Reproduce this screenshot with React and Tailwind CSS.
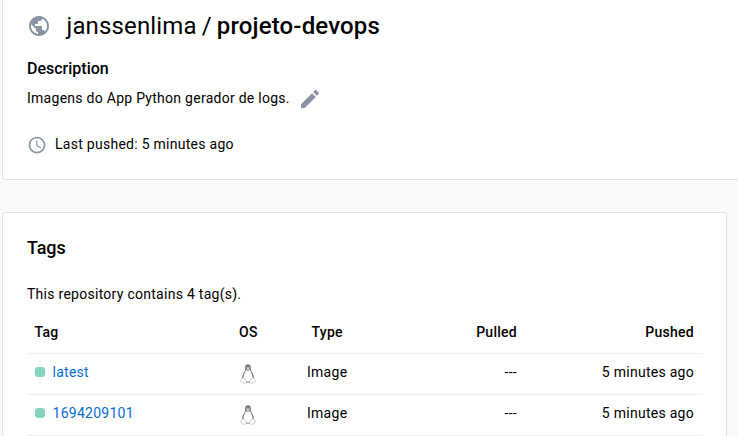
import { MdPublic, MdEdit, MdAccessTime } from "react-icons/md";

const tags = ["latest", "1694209101"];

function Tux() {
  return (
    <svg width="16" height="20" viewBox="0 0 16 20" fill="none">
      <path d="M8 .3C5.900.3 5 1.700 5.100 3.700c.1 2.200-.1 3.200-1.300 5.100C2.600 10.700 1.900 12.400 2.200 14.500h11.600c.3-2.100-.4-3.900-1.500-5.700-1.100-1.900-1.400-2.900-1.400-5.200C10.900 1.600 10.100.3 8 .3Z" fill="#7c7c7c" />
      <path d="M8 6.800c-.9 0-1.700-.4-2.100-1-.2 2.400-2.400 4.300-2.300 7.500.1 2.700 1.700 5.200 4.400 5.200s4.300-2.500 4.400-5.200c.1-3.200-2.100-5.100-2.300-7.500-.4.600-1.200 1-2.100 1Z" fill="#fff" />
      <path d="M6.200 4.700 8 4l1.800.7L8 6.300Z" fill="#e4e4e4" />
      <circle cx="7" cy="3.400" r=".6" fill="#ccc" />
      <circle cx="9" cy="3.400" r=".6" fill="#ccc" />
      <path d="M2.700 14c-.5.9-1.900.8-1.900 1.800 0 .8.300 1.300.1 2 0 1 3.500 1.700 4.700 1.400 1.400-.4 1-1.900.2-3-.9-1.300-2-3.300-3.100-2.200ZM13.300 14c.5.9 1.900.9 1.900 1.800 0 .8-.3 1.300-.1 2 0 1-3.500 1.700-4.600 1.400-1.500-.4-.9-1.900-.5-3 .5-1.400 2.200-3.300 3.300-2.200Z" fill="#fff" stroke="#b8b8b8" strokeWidth=".7" />
      <path d="M6.200 18.200h3.600" stroke="#888" strokeWidth=".9" />
    </svg>
  );
}

export default function App() {
  return (
    <div className="h-[436px] w-[738px] overflow-hidden bg-[#f9f9f9] pl-0.5 font-['Roboto',sans-serif] text-sm leading-5 tracking-[0.27px] text-black">
      <section className="h-[180px] rounded-bl-sm border-b border-l border-[#e1e2e6] bg-white pl-6 pt-[11px]">
        <h1 className="flex h-[30px] items-center text-2xl font-normal tracking-[0.15px]">
          <MdPublic className="mr-[15.5px] size-6 text-[#8993a5]" />
          <span>janssenlima</span>
          <span className="mx-[5px]">/</span>
          <span className="font-medium">projeto-devops</span>
        </h1>
        <h2 className="mt-[18px] text-base leading-5 font-medium tracking-normal">Description</h2>
        <div className="mt-2 flex h-6 items-center">
          <span className="-mt-0.5">Imagens do App Python gerador de logs.</span>
          <MdEdit className="ml-2 size-6 text-[#8993a5]" />
        </div>
        <div className="mt-6 flex h-5 items-center">
          <MdAccessTime className="mr-2 size-5 text-[#8993a5]" />
          <span className="-mt-0.5">Last pushed: 5 minutes ago</span>
        </div>
      </section>
      <section className="mt-8 h-[240px] w-[725px] rounded-t-sm border border-b-0 border-[#e1e2e6] bg-white px-6 pt-[23px]">
        <h2 className="text-lg leading-6 font-medium tracking-[-0.1px]">Tags</h2>
        <p className="mt-6">This repository contains 4 tag(s).</p>
        <table className="mt-2 w-[675px] table-fixed border-collapse">
          <colgroup>
            <col className="w-[204px]" />
            <col className="w-[68px]" />
            <col className="w-[120px]" />
            <col className="w-[106px]" />
            <col className="w-[177px]" />
          </colgroup>
          <thead>
            <tr className="h-[41px] border-b border-[#eeeeee] [&>th]:p-0 [&>th]:pb-px [&>th]:font-medium">
              <th><div className="pl-[7.5px] text-left">Tag</div></th>
              <th><div className="pl-2 text-left">OS</div></th>
              <th><div className="pl-[12.5px] text-left">Type</div></th>
              <th><div className="pr-2 text-right">Pulled</div></th>
              <th><div className="pr-2 text-right">Pushed</div></th>
            </tr>
          </thead>
          <tbody>
            {tags.map((tag) => (
              <tr key={tag} className="h-[41px] border-b border-[#eeeeee] [&>td]:p-0">
                <td>
                  <div className="-mt-1 flex items-center pl-2">
                    <span className="mr-[7.5px] size-2.5 rounded-[3px] bg-[#88d5c0]" />
                    <a className="text-[#086dd7]">{tag}</a>
                  </div>
                </td>
                <td><div className="pl-[9px]"><Tux /></div></td>
                <td><div className="-mt-1 pl-2">Image</div></td>
                <td><div className="-mt-1 pr-2 text-right">---</div></td>
                <td><div className="-mt-1 pr-2 text-right">5 minutes ago</div></td>
              </tr>
            ))}
          </tbody>
        </table>
      </section>
    </div>
  );
}
